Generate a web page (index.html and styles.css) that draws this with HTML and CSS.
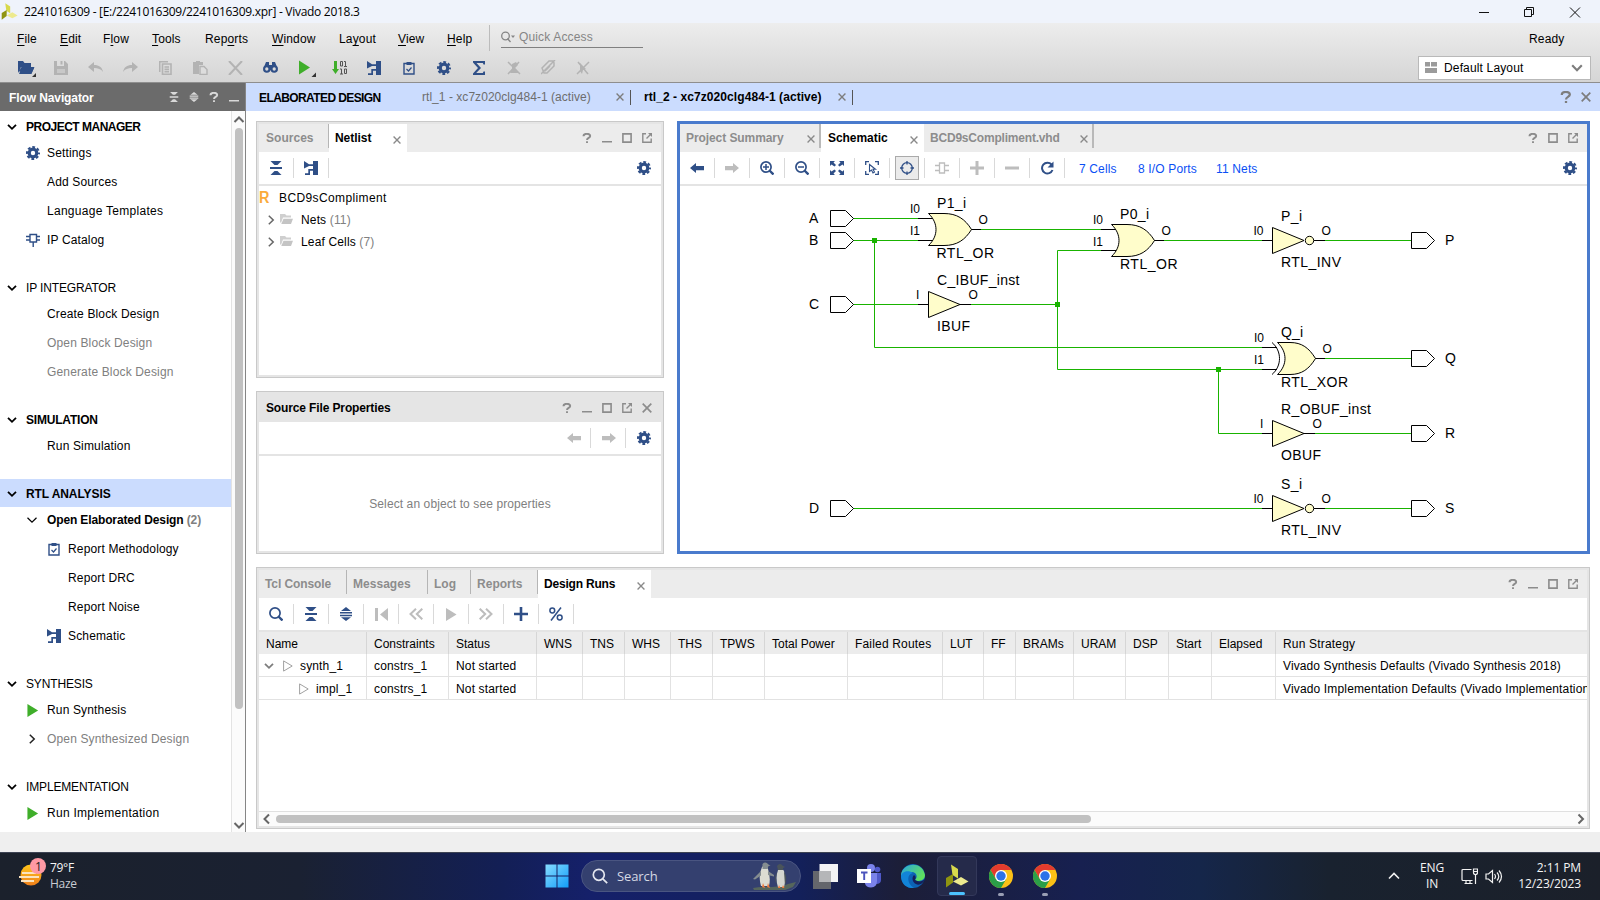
FILE: index.html
```html
<!DOCTYPE html>
<html lang="en">
<head>
<meta charset="utf-8">
<title>Vivado 2018.3</title>
<link rel="stylesheet" href="styles.css">
</head>
<body>
<svg class="defs" width="0" height="0">
  <defs>
    <symbol id="gear" viewBox="0 0 14 14"><circle cx="7" cy="7" r="3.8" fill="none" stroke="currentColor" stroke-width="3.2"/><circle cx="7" cy="7" r="6" fill="none" stroke="currentColor" stroke-width="2" stroke-dasharray="2.8 1.912" stroke-dashoffset="1.4"/></symbol>
    <symbol id="schem" viewBox="0 0 14 14"><path d="M0 0 5 3.2H9V0h5v14H9V5H5L0 7.500zM1 14v-1.700h3.300V8H10v1.700H6V14z" fill="currentColor"/></symbol>
    <symbol id="collapse" viewBox="0 0 14 14"><path d="M1.500 0h11L8.500 4h-3zM1 6h12v2H1zM1.500 14h11L8.500 10h-3z" fill="currentColor"/></symbol>
    <symbol id="expand" viewBox="0 0 14 14"><path d="M7 0l5 4H2zM1 5h12v1.500H1zM1 7.800h12v1.500H1zM2 10.300h10l-5 3.700z" fill="currentColor"/></symbol>
    <symbol id="help" viewBox="0 0 10 10"><path d="M1.500 3.300C1.500 0 8.200 0 8.200 3c0 2-3.200 1.800-3.200 4M5 8.300v1.700" fill="none" stroke="currentColor" stroke-width="1.900"/></symbol>
    <symbol id="min" viewBox="0 0 10 10"><path d="M0 8h10v1.500H0z" fill="currentColor"/></symbol>
    <symbol id="max" viewBox="0 0 10 10"><path d="M.9.900h8.200v8.200H.9z" fill="none" stroke="currentColor" stroke-width="1.600"/></symbol>
    <symbol id="float" viewBox="0 0 10 10"><path d="M4 .8H.8v8.400h8.400V5.500M4.500 5.500 8.500 1.500" fill="none" stroke="currentColor" stroke-width="1.400"/><path d="M6 0h4v4z" fill="currentColor"/></symbol>
    <symbol id="x" viewBox="0 0 10 10"><path d="M.7.700l8.600 8.600M9.300.700L.7 9.300" fill="none" stroke="currentColor" stroke-width="1.700"/></symbol>
    <symbol id="down" viewBox="0 0 10 10"><path d="M1 2.800l4 4 4-4" fill="none" stroke="currentColor" stroke-width="1.800"/></symbol>
    <symbol id="thin-down" viewBox="0 0 10 10"><path d="M.5 2.800 5 7.200l4.500-4.400" fill="none" stroke="currentColor" stroke-width="1.200"/></symbol>
    <symbol id="right" viewBox="0 0 10 10"><path d="M2.800.8 7.200 5 2.800 9.200" fill="none" stroke="currentColor" stroke-width="1.500"/></symbol>
    <symbol id="clip" viewBox="0 0 12 14"><path d="M1 2.500h10V13H1z" fill="none" stroke="currentColor" stroke-width="1.400"/><path d="M3.500 1h5v3h-5z" fill="currentColor"/><path d="M3.500 8l2 2 3-3.500" fill="none" stroke="currentColor" stroke-width="1.200"/></symbol>
    <symbol id="ip" viewBox="0 0 14 14"><path d="M4 1.500h6.500V9H4zM0 3.500h4M0 7h4M10.500 3.500H14M10.500 7H14M7.200 9v5" fill="none" stroke="currentColor" stroke-width="1.400"/></symbol>
    <symbol id="play" viewBox="0 0 12 14"><path d="M0 0l11.500 7L0 14z" fill="currentColor"/></symbol>
    <symbol id="tri" viewBox="0 0 10 12"><path d="M.6.900 9.200 6 .6 11.100z" fill="none" stroke="currentColor" stroke-width="1"/></symbol>
    <symbol id="folder" viewBox="0 0 13 11"><path d="M0 0h5l1.500 1.500H11V3.500H3L1 9 0 8z" fill="#cfcfcf"/><path d="M3.500 4.700H13L11 10H1.300z" fill="#c4c4c4"/></symbol>
    <symbol id="larrow" viewBox="0 0 14 10"><path d="M0 5l6-5v3h8v4.200H6V10z" fill="currentColor"/></symbol>
    <symbol id="rarrow" viewBox="0 0 14 10"><path d="M14 5L8 0v3H0v4.200h8V10z" fill="currentColor"/></symbol>
    <symbol id="search" viewBox="0 0 14 14"><circle cx="6" cy="6" r="5.100" fill="none" stroke="currentColor" stroke-width="1.700"/><path d="M9.500 9.500l4 4" stroke="currentColor" stroke-width="2.400"/></symbol>
    <symbol id="chrome" viewBox="0 0 24 24"><circle cx="12" cy="12" r="12" fill="#fbc116"/><path d="M12 6h10.400A12 12 0 0 0 1.600 6L6.800 15z" fill="#e33b2e"/><path d="M1.600 6A12 12 0 0 0 12 24l5.200-9H6.800z" fill="#2b9f48"/><circle cx="12" cy="12" r="6" fill="#fff"/><circle cx="12" cy="12" r="4.700" fill="#2d72e8"/></symbol>
    <symbol id="vivado" viewBox="0 0 24 24"><path d="M6 0.500l7 4.500v9.500L7.500 11z" fill="#d8d94c"/><path d="M1 14l7-4v8.500l-7 5z" fill="#8f9410"/><path d="M8 17.500l8-4.500 7.500 4.500-7.500 4z" fill="#edea8e"/></symbol>
  </defs>
</svg>

<header class="titlebar">
  <svg class="logo" width="17" height="17"><use href="#vivado"/></svg>
  <span class="title">2241016309 - [E:/2241016309/2241016309.xpr] - Vivado 2018.3</span>
  <svg class="winbtns" width="110" height="20" fill="none" stroke="#111"><path d="M0 10.500h10M45.500 7.500h7v7h-7zM47.500 7.500v-2h7v7h-2M91 5.500l10 10M101 5.500l-10 10"/></svg>
</header>

<section class="top">
  <div class="menurow">
    <nav class="menu">
      <span><u>F</u>ile</span><span><u>E</u>dit</span><span>F<u>l</u>ow</span><span><u>T</u>ools</span><span>Rep<u>o</u>rts</span><span><u>W</u>indow</span><span>La<u>y</u>out</span><span><u>V</u>iew</span><span><u>H</u>elp</span>
    </nav>
    <div class="quick"><svg width="15" height="12" fill="none" stroke="#858585" stroke-width="1.300"><circle cx="4.500" cy="5" r="3.800"/><path d="M6.500 7.500l3 3.500"/><path d="M10 4.500h4l-2 2.500z" fill="#858585" stroke="none"/></svg><span>Quick Access</span></div>
    <span class="ready">Ready</span>
  </div>
  <div class="iconrow">
    <i><svg width="20" height="18"><path d="M2 2h5l1.500 2H15v4H5L3 12.500 14 13h2l2.500-5H5.500L2 14z" fill="#2f4f87"/><path d="M5.500 9H18l-2.500 6H3z" fill="#2f4f87"/><path d="M20 14v4h-4z" fill="#333"/></svg></i>
    <i class="off"><svg width="14" height="14"><path d="M0 0h3v5h7V0h1l3 3v11H0z M6.500 0h2v3.500h-2z" fill="currentColor"/><path d="M3 9h8M3 11h8" stroke="#ddd"/></svg></i>
    <i class="off"><svg width="15" height="11"><path d="M0 5L6 0v3c5 0 8 2 9 7-2-3-5-4-9-4v4z" fill="currentColor"/></svg></i>
    <i class="off"><svg width="15" height="11"><path d="M15 5L9 0v3C4 3 1 5 0 10c2-3 5-4 9-4v4z" fill="currentColor"/></svg></i>
    <i class="off"><svg width="13" height="14" fill="none" stroke="currentColor" stroke-width="1.600"><path d="M.7 11V.7H9M3.500 3h8.500v10.300H3.500zM5.500 6h4.500M5.500 8.300h4.500M5.500 10.600h4.500"/></svg></i>
    <i class="off"><svg width="15" height="14"><path d="M0 1h3V0h4v1h3v3H6v9H0z" fill="currentColor"/><path d="M7 5.500h4l3 3v5H7z" fill="#ddd" stroke="currentColor" stroke-width="1.400"/></svg></i>
    <i class="off"><svg width="15" height="14"><path d="M1 0l13 14M14 0L1 14" stroke="currentColor" stroke-width="2"/></svg></i>
    <i class="bino"><svg width="15" height="11"><circle cx="3.800" cy="7" r="2.700" fill="none" stroke="#2f4f87" stroke-width="2.100"/><circle cx="11.200" cy="7" r="2.700" fill="none" stroke="#2f4f87" stroke-width="2.100"/><path d="M3 0h3v3h3V0h3l2 5H1zM6 4h3v4H6z" fill="#2f4f87"/></svg></i>
    <i class="run"><svg width="20" height="18"><path d="M2 1.500l11 7-11 7z" fill="#3fae2a"/><path d="M19 13.500v4.500h-4.500z" fill="#333"/></svg></i>
    <i><svg width="15" height="14"><path d="M2 0h3v8h2l-3.500 5L0 8h2z" fill="#3fae2a"/><g fill="none" stroke="#555"><path d="M8.500 .5h2v4.500h-2zM12 .5h1.500v5M12 5.500h3M8 8h1.500v5M8 13h3M12.500 8h2v4.500h-2z"/></g></svg></i>
    <i><svg width="14" height="14"><use href="#schem"/></svg></i>
    <i><svg width="12" height="14"><use href="#clip"/></svg></i>
    <i><svg width="14" height="14"><use href="#gear"/></svg></i>
    <i><svg width="14" height="14"><path d="M1 0h12v3.500h-1.500l-.7-1.500H4.500L9 7l-4.800 5h6.600l.7-1.500H13V14H1v-1.500L6 7 1 1.500z" fill="#2f4f87"/></svg></i>
    <i class="off"><svg width="14" height="14" fill="none" stroke="currentColor" stroke-width="1.500"><path d="M1 1l12 12M1 13L12 1"/><path d="M5 3l4-2 2 3-3 3 4 5H3l2-4z" fill="currentColor" stroke="none"/></svg></i>
    <i class="off"><svg width="15" height="15" fill="none" stroke="currentColor" stroke-width="1.500"><path d="M1 8l7-7h4l1 2v3l-7 7H3zM0 14L14 0M4 11l5-5"/></svg></i>
    <i class="off"><svg width="14" height="14" fill="none" stroke="currentColor" stroke-width="1.500"><path d="M1 13L13 1M2 1l10 12"/><path d="M4 2l6 6-3 1-1 4-2-3z" fill="currentColor" stroke="none"/></svg></i>
    <div class="combo"><svg width="12" height="11"><path d="M0 0h5v4.500H0zM6 0h6v4.500H6zM0 6h12v5H0z" fill="#9b9b9b"/></svg><span>Default Layout</span><svg class="gray" width="12" height="12"><use href="#down"/></svg></div>
  </div>
</section>

<main class="body">
  <aside class="nav">
    <div class="navhead"><span>Flow Navigator</span><svg width="10" height="10"><use href="#collapse"/></svg><svg width="10" height="10"><use href="#expand"/></svg><svg width="10" height="10"><use href="#help"/></svg><svg width="10" height="10"><use href="#min"/></svg></div>
    <div class="navbody">
      <div class="navlist">
        <section><h2 class="b pm"><svg width="10" height="10"><use href="#down"/></svg>PROJECT MANAGER</h2>
          <ul><li><svg class="blue" width="14" height="14"><use href="#gear"/></svg>Settings</li><li>Add Sources</li><li class="wide">Language Templates</li><li><svg class="blue" width="14" height="14"><use href="#ip"/></svg>IP Catalog</li></ul></section>
        <section><h2><svg width="10" height="10"><use href="#down"/></svg>IP INTEGRATOR</h2>
          <ul><li>Create Block Design</li><li class="dim">Open Block Design</li><li class="dim">Generate Block Design</li></ul></section>
        <section><h2 class="b sim"><svg width="10" height="10"><use href="#down"/></svg>SIMULATION</h2>
          <ul><li>Run Simulation</li></ul></section>
        <section><h2 class="b sel"><svg width="10" height="10"><use href="#down"/></svg>RTL ANALYSIS</h2>
          <ul><li class="bb"><svg width="10" height="10"><use href="#thin-down"/></svg>Open Elaborated Design&nbsp;<em>(2)</em></li><li class="sub"><svg class="blue" width="12" height="14"><use href="#clip"/></svg>Report Methodology</li><li class="sub">Report DRC</li><li class="sub">Report Noise</li><li class="sub"><svg class="blue" width="14" height="14"><use href="#schem"/></svg>Schematic</li></ul></section>
        <section><h2><svg width="10" height="10"><use href="#down"/></svg>SYNTHESIS</h2>
          <ul><li><svg class="green" width="12" height="13"><use href="#play"/></svg>Run Synthesis</li><li class="dim"><svg class="black" width="10" height="10"><use href="#right"/></svg>Open Synthesized Design</li></ul></section>
        <section><h2><svg width="10" height="10"><use href="#down"/></svg>IMPLEMENTATION</h2>
          <ul><li class="wide"><svg class="green" width="12" height="13"><use href="#play"/></svg>Run Implementation</li></ul></section>
      </div>
      <div class="vscroll"><svg width="12" height="10"><path d="M1.500 8L6 3.500 10.500 8" fill="none" stroke="#666" stroke-width="2"/></svg><div class="vthumb"></div><svg width="12" height="10"><path d="M1.500 2L6 6.500 10.500 2" fill="none" stroke="#666" stroke-width="2"/></svg></div>
    </div>
  </aside>

  <div class="work">
    <div class="designbar">
      <b class="ed">ELABORATED DESIGN</b>
      <span class="r1">rtl_1 - xc7z020clg484-1 (active)</span><svg class="gray" width="8" height="8"><use href="#x"/></svg><i></i>
      <b class="r2">rtl_2 - xc7z020clg484-1 (active)</b><svg class="gray" width="8" height="8"><use href="#x"/></svg><i></i>
      <span class="grow"></span><svg class="gray" width="12" height="12"><use href="#help"/></svg><svg class="gray" width="10" height="10"><use href="#x"/></svg>
    </div>
    <div class="panels">
      <div class="leftcol">
        <div class="panel netlist">
          <div class="tabs"><span class="tab w1">Sources</span><span class="tab on w2">Netlist<svg width="8" height="8"><use href="#x"/></svg></span><span class="grow"></span><svg width="10" height="10"><use href="#help"/></svg><svg width="10" height="10"><use href="#min"/></svg><svg width="10" height="10"><use href="#max"/></svg><svg width="10" height="10"><use href="#float"/></svg></div>
          <div class="tools"><i><svg width="14" height="14"><use href="#collapse"/></svg></i><i><svg width="14" height="14"><use href="#schem"/></svg></i><span class="grow"></span><i class="last"><svg width="14" height="14"><use href="#gear"/></svg></i></div>
          <div class="tree">
            <div class="root"><b class="rr">R</b>BCD9sCompliment</div>
            <div class="t2"><svg width="10" height="10"><use href="#right"/></svg><svg class="fo" width="13" height="11"><use href="#folder"/></svg>Nets&nbsp;<em>(11)</em></div>
            <div class="t2"><svg width="10" height="10"><use href="#right"/></svg><svg class="fo" width="13" height="11"><use href="#folder"/></svg>Leaf Cells&nbsp;<em>(7)</em></div>
          </div>
        </div>
        <div class="panel props">
          <div class="tabs"><b>Source File Properties</b><span class="grow"></span><svg width="10" height="10"><use href="#help"/></svg><svg width="10" height="10"><use href="#min"/></svg><svg width="10" height="10"><use href="#max"/></svg><svg width="10" height="10"><use href="#float"/></svg><svg width="10" height="10"><use href="#x"/></svg></div>
          <div class="tools"><span class="grow"></span><i class="off"><svg width="14" height="10"><use href="#larrow"/></svg></i><i class="off"><svg width="14" height="10"><use href="#rarrow"/></svg></i><i class="last"><svg width="14" height="14"><use href="#gear"/></svg></i></div>
          <div class="empty">Select an object to see properties</div>
        </div>
      </div>
      <div class="panel schematic">
        <div class="tabs"><span class="tab s1">Project Summary<svg width="8" height="8"><use href="#x"/></svg></span><span class="tab on s2">Schematic<svg width="8" height="8"><use href="#x"/></svg></span><span class="tab s3">BCD9sCompliment.vhd<svg width="8" height="8"><use href="#x"/></svg></span><span class="grow"></span><svg width="10" height="10"><use href="#help"/></svg><svg width="10" height="10"><use href="#max"/></svg><svg width="10" height="10"><use href="#float"/></svg></div>
        <div class="tools">
          <i><svg width="14" height="10"><use href="#larrow"/></svg></i>
          <i class="off"><svg width="14" height="10"><use href="#rarrow"/></svg></i>
          <i><svg width="14" height="14"><use href="#search"/><path d="M3 6h6M6 3v6" stroke="currentColor" stroke-width="1.500"/></svg></i>
          <i><svg width="14" height="14"><use href="#search"/><path d="M3 6h6" stroke="currentColor" stroke-width="1.500"/></svg></i>
          <i><svg width="14" height="14" fill="currentColor"><path d="M0 0h5L3.500 1.500 6 4 4.500 5.500 1.500 3.500 0 5zM14 0v5l-1.500-1.500L9.500 5.500 8 4l2.500-2.500L9 0zM0 14V9l1.500 1.500L4.500 8.500 6 10l-2.500 2.500L5 14zM14 14H9l1.500-1.500L8 10l1.500-1.500 3 2L14 9z"/></svg></i>
          <i><svg width="14" height="14" fill="none" stroke="currentColor" stroke-width="1.300"><path d="M.7 4V.7H4M10 .7h3.300V4M.7 10v3.300H4M13.300 10v3.300H10"/><path d="M4.500 3.500v7l2-1.500 1.500 3 1.500-1-1.500-2.700h2.500z" stroke-width="1.100"/></svg></i>
          <i class="press"><span><svg width="14" height="14" fill="none" stroke="currentColor" stroke-width="1.300"><circle cx="7" cy="7" r="5.300"/><path d="M7 0v3.500M7 10.500V14M0 7h3.500M10.500 7H14"/></svg></span></i>
          <i class="off"><svg width="14" height="12" fill="none" stroke="currentColor" stroke-width="1.300"><path d="M4.500 1h5v10h-5zM0 3.500h4.500M0 8.500h4.500M9.500 3.500H14M9.500 8.500H14"/></svg></i>
          <i class="off"><svg width="14" height="14"><path d="M7 0v14M0 7h14" stroke="currentColor" stroke-width="3"/></svg></i>
          <i class="off"><svg width="14" height="14"><path d="M0 7h14" stroke="currentColor" stroke-width="3"/></svg></i>
          <i><svg width="14" height="14"><path d="M11.500 3.500a5.400 5.400 0 1 0 1 5.500" fill="none" stroke="currentColor" stroke-width="2"/><path d="M13.500.500v6h-6z" fill="currentColor"/></svg></i>
          <a class="l1">7 Cells</a><a class="l2">8 I/O Ports</a><a class="l3">11 Nets</a>
          <span class="grow"></span><i class="last"><svg width="14" height="14"><use href="#gear"/></svg></i>
        </div>
        <svg class="canvas" width="907" height="365" viewBox="680 186 907 365">
          <g fill="none" stroke="#19b300">
            <path d="M853 218.500H918M853 240.500H918M874.500 240.500V347.500H1262M853 304.500H918M971 304.500H1057.500M1101 250.500H1057.500V369.500H1262M981 229.500H1101M1164 240.500H1262M1218.500 369.500V433.500H1262M853 508.500H1262M1325 240.500H1411M1325 358.500H1411M1315 433.500H1411M1325 508.500H1411"/>
            <path d="M872 238h5v5h-5zM1055 302h5v5h-5zM1216 367h5v5h-5z" fill="#19b300" stroke="none"/>
          </g>
          <g fill="#fff" stroke="#000">
            <path d="M830.500 210.500h15l8 8-8 8h-15zM830.500 232.500h15l8 8-8 8h-15zM830.500 296.500h15l8 8-8 8h-15zM830.500 500.500h15l8 8-8 8h-15z"/>
            <path d="M1411.500 232.500h15l8 8-8 8h-15zM1411.500 350.500h15l8 8-8 8h-15zM1411.500 425.500h15l8 8-8 8h-15zM1411.500 500.500h15l8 8-8 8h-15z"/>
            <path fill="none" d="M918 218.500h16M918 240.500h16M971 229.500h10M1101 229.500h16M1101 250.500h16M1154 240.500h10M918 304.500h10M960 304.500h11M1262 240.500h10M1314 240.500h11M1262 347.500h15M1262 369.500h15M1315 358.500h10M1262 433.500h10M1304 433.500h11M1262 508.500h10M1314 508.500h11M1272 342.500C1282 351 1282 366 1272 374.500"/>
          </g>
          <g fill="#fffdcb" stroke="#000">
            <path d="M928.500 213.500H944C957 213.500 965 219 971.500 229.500 965 240 957 245.500 944 245.500H928.500C938.500 236 938.500 223 928.500 213.500z"/>
            <path d="M1111.500 224.500H1127C1140 224.500 1148 230 1154.500 240.500 1148 251 1140 256.500 1127 256.500H1111.500C1121.500 247 1121.500 234 1111.500 224.500z"/>
            <path d="M1277.500 342.500H1290C1302 342.500 1309 348 1315.500 358.500 1309 369 1302 374.500 1290 374.500H1277.500C1287.500 365 1287.500 352 1277.500 342.500z"/>
            <path d="M928.500 291.500v26l31.500-13zM1272.500 227.500v26l31.500-13zM1272.500 420.500v26l31.500-13zM1272.500 495.500v26l31.500-13z"/>
            <circle cx="1309.500" cy="240.500" r="4.200"/><circle cx="1309.500" cy="508.500" r="4.200"/>
          </g>
          <g class="lbl">
            <text x="809" y="223">A</text><text x="809" y="245">B</text><text x="809" y="309">C</text><text x="809" y="513">D</text>
            <text x="1445" y="245">P</text><text x="1445" y="363">Q</text><text x="1445" y="438">R</text><text x="1445" y="513">S</text>
            <text x="937" y="208" textLength="29">P1_i</text><text x="936.500" y="258" textLength="57.500">RTL_OR</text>
            <text x="937" y="285" textLength="82.500">C_IBUF_inst</text><text x="937" y="331" textLength="33">IBUF</text>
            <text x="1120" y="219" textLength="29">P0_i</text><text x="1120" y="269" textLength="57.500">RTL_OR</text>
            <text x="1281" y="221" textLength="21">P_i</text><text x="1281" y="267" textLength="60">RTL_INV</text>
            <text x="1281" y="337" textLength="22">Q_i</text><text x="1281" y="387" textLength="67">RTL_XOR</text>
            <text x="1281" y="414" textLength="90">R_OBUF_inst</text><text x="1281" y="460" textLength="40">OBUF</text>
            <text x="1281" y="489" textLength="21">S_i</text><text x="1281" y="535" textLength="60">RTL_INV</text>
          </g>
          <g class="pin">
            <text x="910" y="213">I0</text><text x="910" y="235">I1</text><text x="978.500" y="224">O</text>
            <text x="916" y="299">I</text><text x="968.500" y="299">O</text>
            <text x="1093" y="224">I0</text><text x="1093" y="246">I1</text><text x="1161.500" y="235">O</text>
            <text x="1253.500" y="235">I0</text><text x="1321.500" y="235">O</text>
            <text x="1254" y="342">I0</text><text x="1254" y="364">I1</text><text x="1322.500" y="353">O</text>
            <text x="1260" y="428">I</text><text x="1312.500" y="428">O</text>
            <text x="1253.500" y="503">I0</text><text x="1321.500" y="503">O</text>
          </g>
        </svg>
      </div>
    </div>
    <div class="panel runs">
      <div class="tabs"><span class="tab q1">Tcl Console</span><span class="tab q2">Messages</span><span class="tab q3">Log</span><span class="tab q4">Reports</span><span class="tab on q5">Design Runs<svg width="8" height="8"><use href="#x"/></svg></span><span class="grow"></span><svg width="10" height="10"><use href="#help"/></svg><svg width="10" height="10"><use href="#min"/></svg><svg width="10" height="10"><use href="#max"/></svg><svg width="10" height="10"><use href="#float"/></svg></div>
      <div class="tools">
        <i><svg width="14" height="14"><use href="#search"/></svg></i><i><svg width="14" height="14"><use href="#collapse"/></svg></i><i><svg width="14" height="14"><use href="#expand"/></svg></i>
        <i class="off"><svg width="13" height="13"><path d="M0 0h3v13H0zM13 0v13L5 6.500z" fill="currentColor"/></svg></i>
        <i class="off"><svg width="14" height="12" fill="none" stroke="currentColor" stroke-width="2"><path d="M7 .7L1.500 6 7 11.300M13.300.7L7.800 6l5.500 5.300"/></svg></i>
        <i class="off"><svg width="11" height="13"><use href="#play"/></svg></i>
        <i class="off"><svg width="14" height="12" fill="none" stroke="currentColor" stroke-width="2"><path d="M7 .7L12.500 6 7 11.300M.7.700L6.200 6 .7 11.300"/></svg></i>
        <i><svg width="14" height="14"><path d="M7 0v14M0 7h14" stroke="currentColor" stroke-width="2.600"/></svg></i>
        <i><svg width="14" height="14" fill="none" stroke="currentColor" stroke-width="1.500"><circle cx="3.300" cy="3.500" r="2.400"/><circle cx="10.700" cy="10.500" r="2.400"/><path d="M12 .5L2 13.500"/></svg></i>
      </div>
      <div class="table">
        <div class="tr th"><span>Name</span><span>Constraints</span><span>Status</span><span>WNS</span><span>TNS</span><span>WHS</span><span>THS</span><span>TPWS</span><span>Total Power</span><span class="fr">Failed Routes</span><span>LUT</span><span>FF</span><span>BRAMs</span><span>URAM</span><span>DSP</span><span>Start</span><span>Elapsed</span><span class="fr">Run Strategy</span></div>
        <div class="tr"><span class="n1"><svg class="gray" width="10" height="10"><use href="#down"/></svg><svg class="tri" width="10" height="12"><use href="#tri"/></svg>synth_1</span><span>constrs_1</span><span>Not started</span><span></span><span></span><span></span><span></span><span></span><span></span><span></span><span></span><span></span><span></span><span></span><span></span><span></span><span></span><span class="st">Vivado Synthesis Defaults (Vivado Synthesis 2018)</span></div>
        <div class="tr"><span class="n2"><svg class="tri" width="10" height="12"><use href="#tri"/></svg>impl_1</span><span>constrs_1</span><span>Not started</span><span></span><span></span><span></span><span></span><span></span><span></span><span></span><span></span><span></span><span></span><span></span><span></span><span></span><span></span><span>Vivado Implementation Defaults (Vivado Implementation</span></div>
      </div>
      <div class="hscroll"><svg width="10" height="12"><path d="M7 1.500L2.500 6 7 10.500" fill="none" stroke="#666" stroke-width="2"/></svg><div class="hthumb"></div><span class="grow"></span><svg width="10" height="12"><path d="M2.500 1.500L7 6l-4.500 4.500" fill="none" stroke="#666" stroke-width="2"/></svg></div>
    </div>
  </div>
</main>
<div class="status"></div>

<footer class="taskbar">
  <div class="weather"><svg width="28" height="30"><defs><linearGradient id="sun" x1="0" y1="0" x2="0" y2="1"><stop offset="0" stop-color="#ffc61a"/><stop offset="1" stop-color="#ef7f1a"/></linearGradient></defs><circle cx="13" cy="17" r="10.500" fill="url(#sun)"/><path d="M4 15h14M1 19h20M3 23h13" stroke="#fbe3bd" stroke-width="1.800"/><circle cx="20" cy="8" r="8" fill="#ff99a4"/><text x="17" y="12.500" class="badge">1</text></svg><div><p>79°F</p><p class="hz">Haze</p></div></div>
  <div class="apps">
    <svg class="start" width="24" height="24"><defs><linearGradient id="win" x1="0" y1="0" x2="1" y2="1"><stop offset="0" stop-color="#86dcff"/><stop offset="1" stop-color="#129df8"/></linearGradient></defs><path d="M.5.500h11v11H.5zM12.500.500h11v11h-11zM.5 12.500h11v11H.5zM12.500 12.500h11v11h-11z" fill="url(#win)"/></svg>
    <div class="sbox"><svg width="16" height="16" fill="none" stroke="#e4e6ef" stroke-width="1.700"><circle cx="6.800" cy="6.800" r="5.500"/><path d="M10.800 10.800l4.400 4.400"/></svg><span>Search</span>
      <svg width="46" height="30" viewBox="0 0 46 30"><path d="M1 27q8-2 19-1 12-1 16-3l8-2-3 5-8 3H2z" fill="#56665c"/><path d="M10 6q4-3 6 2 3 9 1 17H9Q6 15 10 6z" fill="#dcdcd2"/><path d="M9 10L1 18l2 .500 6-4zM16 10l6 4v1.500l-6-1.500zM10.500 3q3-3 6 .5l2 1-2 .5-1 3h-5z" fill="#858d90"/><path d="M26 9q4-3 6 1 2.500 9 0 16h-6q-3-9 0-17z" fill="#d3d5cf"/><path d="M25 5q3-4 6 0l2 1-2 1v2h-5zM25.500 10q-3 7-.5 14-4-7 .5-14zM32 10q4 7 1 15z" fill="#4a545a"/><path d="M10 26l1-4 2 5zM15 26l1-4 2 5zM26 27l1-3 1.500 3zM30 27l1-3 1.500 3z" fill="#f07b3c"/></svg></div>
    <svg class="tv" width="25" height="25"><path d="M0 7h18v18H0z" fill="#64666c"/><path d="M6.500 0H25v18H6.500z" fill="#f3f3f4"/><path d="M6.500 7H18v11H6.500z" fill="#b5b6b8"/></svg>
    <svg class="tm" width="25" height="24"><circle cx="20.500" cy="5.500" r="2.800" fill="#5059c9"/><circle cx="14" cy="4" r="4" fill="#7b83eb"/><path d="M17 9h7v7q0 4-5 4z" fill="#5059c9"/><path d="M8 9h12v8q0 6-6 6.500-5 0-6-4z" fill="#7b83eb"/><path d="M0 5h14v14H0z" fill="#fff"/><path d="M4 8.500h6.500M7.200 8.500V16" stroke="#4b53bc" stroke-width="1.900"/></svg>
    <svg class="eg" width="24" height="24" viewBox="0 0 24 24"><defs><linearGradient id="eg1" x1="0" y1="0" x2="1" y2=".5"><stop offset="0" stop-color="#2ba7e0"/><stop offset="1" stop-color="#5fe05e"/></linearGradient></defs><circle cx="12" cy="12" r="12" fill="#0c62b4"/><path d="M0 11C1-1 21-4 24 11c0 6-7 7-10 5 3-3 2-8-4-8-6 0-9 2-10 5z" fill="url(#eg1)"/><path d="M0 12c1-5 8-6 12-3-6 1-7 10 1 15C5 25 0 19 0 12z" fill="#1284d8"/><path d="M14 16c3 2 7 2 10-1-1 4-6 7-9 5-3-1-5-6-2-9 2 1 2 3 1 5z" fill="#14205a"/></svg>
    <div class="vv"><svg width="24" height="24"><use href="#vivado"/></svg><i></i></div>
    <div class="ch"><svg width="24" height="24"><use href="#chrome"/></svg><i></i></div>
    <div class="ch"><svg width="24" height="24"><use href="#chrome"/></svg><i></i></div>
  </div>
  <div class="tray">
    <svg width="12" height="8" fill="none" stroke="#f2f2f2" stroke-width="1.600"><path d="M1 6.500l5-5 5 5"/></svg>
    <div class="lang"><p>ENG</p><p>IN</p></div>
    <svg class="mon" width="17" height="17" fill="none" stroke="#f2f2f2" stroke-width="1.200"><path d="M10.500 1.500H2q-1 0-1 1v9q0 1 1 1h9.500M5 12.500v3M9 12.500v3M3.500 15.500h8M12.500 1h4v3.500q0 2-2 2t-2-2zM12.500 3.500h4M14.500 6.500V16"/></svg>
    <svg class="spk" width="18" height="15" fill="none" stroke="#f2f2f2" stroke-width="1.200"><path d="M1 5h2.500L7.500 1.500v12L3.500 10H1zM9.500 5q2 2.500 0 5M12 3.500q3.500 4 0 8M14 1.500q5 6 0 12"/></svg>
    <div class="clock"><p>2:11 PM</p><p>12/23/2023</p></div>
  </div>
</footer>
</body>
</html>
```

FILE: styles.css
```css
* { box-sizing: border-box; }
body { margin: 0; width: 1600px; height: 900px; overflow: hidden; display: flex; flex-direction: column; font: 12px/16px "Liberation Sans", Arial, sans-serif; letter-spacing: .15px; color: #000; background: #fff; }
p, h2, ul { margin: 0; padding: 0; }
em, i { font-style: normal; }
em { color: #808080; }
svg { flex: none; display: block; }
.defs { position: absolute; }
.grow { flex: 1; }
.gray { color: #7d7d7d; }
.blue { color: #2f4f87; }
.green { color: #3fae2a; }
.black { color: #222; }

.titlebar { height: 23px; flex: none; display: flex; align-items: center; background: #eff3fb; padding-left: 1px; }
.title { font: 12px/20px "Open Sans", "Noto Sans", sans-serif; letter-spacing: -.28px; margin-left: 6px; flex: 1; }
.winbtns { margin-right: 11px; }

.top { height: 60px; flex: none; background: linear-gradient(#ededed, #d5d5d5); border-bottom: 1px solid #8e8e8e; }
.menurow { height: 30px; display: flex; align-items: center; }
.menu { display: grid; grid-template-columns: 43px 43px 49px 53px 67px 67px 59px 49px 42px; padding: 2px 0 0 17px; width: 489px; }
.menu u { text-underline-offset: 2px; }
.quick { height: 26px; border-left: 1px solid #bcbcbc; padding: 0 0 3px 11px; display: flex; gap: 3px; align-items: center; color: #858585; width: 154px; background: linear-gradient(#808080, #808080) 11px 22px / 142px 1px no-repeat; }
.ready { margin-left: auto; width: 71px; padding-top: 2px; }
.iconrow { height: 29px; display: flex; align-items: center; padding: 0 9px 0 9px; color: #2f4f87; }
.iconrow > i { width: 34.8px; display: flex; justify-content: center; align-items: center; height: 28px; }
.iconrow > .bino { padding-left: 2px; }
.iconrow > .run { padding-left: 5px; }
.off { color: #bdbdbd !important; }
.iconrow .off { color: #b3b3b3 !important; }
.combo { margin-left: auto; width: 173px; height: 24px; border: 1px solid #b9b9b9; background: #fff; color: #000; display: flex; align-items: center; padding: 0 7px 0 6px; }
.combo span { flex: 1; margin-left: 7px; padding-top: 1px; }

.body { height: 749px; flex: none; display: flex; }
.nav { width: 246px; flex: none; border-right: 1px solid #858585; display: flex; flex-direction: column; }
.navhead { height: 28px; background: #6b6b6b; color: #d9d9d9; font-weight: bold; letter-spacing: -.1px; display: flex; align-items: center; gap: 10px; padding: 2px 6px 0 9px; }
.navhead svg { margin-top: -2px; }
.navhead span { flex: 1; color: #fff; }
.navbody { height: 721px; display: flex; }
.navlist { width: 231px; padding-top: 1px; }
.navlist section { margin-bottom: 19px; }
.navlist h2 { height: 28px; font-size: 12px; font-weight: normal; letter-spacing: -.15px; display: flex; align-items: center; gap: 9px; padding: 1px 0 0 7px; }
.navlist h2.b { font-weight: bold; letter-spacing: -.08px; }
.navlist h2.pm { letter-spacing: -.5px; }
.navlist h2.sim { letter-spacing: -.2px; }
.navlist h2.sel { background: #cbdcfe; }
.navlist ul { margin-top: -2px; list-style: none; }
.navlist li { height: 29px; display: flex; align-items: center; padding: 1px 0 0 47px; }
.navlist li svg { width: 14px; margin-left: -21px; margin-right: 7px; }
.navlist li.bb { font-weight: bold; letter-spacing: -.13px; }
.navlist li.sub { padding-left: 68px; }
.navlist li.wide { letter-spacing: .28px; }
.navlist li svg[width="10"] { width: 10px; margin-right: 10px; margin-left: -20px; }
.dim { color: #808080; }
.vscroll { width: 14px; border-left: 1px solid #e3e3e3; background: #fbfbfb; display: flex; flex-direction: column; align-items: center; padding: 3px 0 1px; }
.vthumb { width: 8px; height: 581px; margin: 4px 0 auto; border-radius: 4px; background: #c1c1c1; }

.work { flex: 1; min-width: 0; }
.designbar { height: 28px; background: #cbdcfe; display: flex; align-items: center; padding: 0 9px 0 13px; }
.designbar b { letter-spacing: 0; }
.designbar .ed { width: 163px; padding-top: 1px; letter-spacing: -.6px; }
.designbar .r1 { width: 194px; color: #6d6d6d; letter-spacing: .04px; }
.designbar .r2 { width: 194px; letter-spacing: .07px; }
.designbar i { width: 1px; height: 15px; background: #555; margin: 0 13px 0 6px; }
.designbar .grow + svg { margin-right: 9px; }

.panels { display: flex; gap: 13px; padding: 10px 0 0 10px; }
.leftcol { width: 408px; display: flex; flex-direction: column; gap: 13px; }
.panel { border: 1px solid #c9c9c9; background: #fff; box-shadow: inset 0 0 0 2px #e5e5e5; padding: 2px; display: flex; flex-direction: column; }
.netlist { height: 257px; }
.props { height: 163px; }
.schematic { width: 913px; height: 433px; border: 3px solid #4a7bcd; padding: 0; box-shadow: none; }
.runs { width: 1334px; height: 262px; margin: 13px 0 0 10px; }
.tabs { height: 28px; flex: none; background: #ececec; display: flex; align-items: center; color: #8c8c8c; padding-right: 9px; }
.tabs > svg { margin-left: 10px; }
.tab { height: 24px; align-self: flex-start; border-right: 1px solid #b5b5b5; font-weight: bold; letter-spacing: .03px; display: flex; align-items: center; justify-content: space-between; padding: 3px 6px 0 7px; }
.tab svg { color: #8a8a8a; margin-top: 2px; }
.tab.on { height: 28px; background: #fff; color: #000; border: 0; padding-bottom: 2px; padding-top: 2px; letter-spacing: -.05px; }
.tab.on svg { margin-top: 3px; }
.w1 { width: 70px; } .tab.w2 { width: 78px; padding-left: 6px; }
.s1 { width: 141px; border-right: 2px solid #b9b9b9; padding-left: 6px; padding-right: 4px; letter-spacing: -.08px; } .s2 { width: 103px; } .s3 { width: 170px; border-right: 2px solid #b9b9b9; padding-left: 6px; padding-right: 4px; letter-spacing: -.2px; }
.q1 { width: 88px; padding-left: 6px; letter-spacing: -.1px; } .q2 { width: 81px; padding-left: 6px; } .q3 { width: 43px; padding-left: 6px; } .q4 { width: 67px; padding-left: 6px; } .tab.q5 { width: 113px; padding-left: 6px; letter-spacing: -.2px; }
.props .tabs { background: #e5e5e5; padding: 0 9px 1px 7px; }
.props .tabs b { color: #000; letter-spacing: -.13px; }
.tools { height: 34px; flex: none; border-bottom: 2px solid #e4e4e4; display: flex; align-items: center; color: #2f4f87; }
.tools > i { width: 35px; height: 20px; border-right: 1px solid #d9d9d9; display: flex; align-items: center; justify-content: center; }
.tools > i.last { border: 0; }
.props .tools .off { padding-left: 2px; }
.press span { width: 24px; height: 24px; flex: none; border: 1px solid #aaa; background: #ebebeb; display: flex; align-items: center; justify-content: center; }
.tools a { color: #0a4ff5; padding-top: 2px; }
.l1 { margin-left: 14px; width: 59px; } .l2 { width: 78px; }
.tree > div { height: 22px; display: flex; align-items: center; padding-top: 1px; }
.tree .root { letter-spacing: .38px; }
.rr { width: 20px; font-size: 16px; color: #fbab3c; letter-spacing: 0; transform: scaleX(.9); transform-origin: 0 50%; }
.t2 { padding-left: 7px; }
.t2 svg { color: #666; }
.t2 .fo { margin: 0 8px 0 4px; }
.empty { flex: 1; display: flex; align-items: center; justify-content: center; color: #808080; letter-spacing: .1px; }
.canvas text { letter-spacing: 0; }
.lbl { font-size: 14px; }
.pin { font-size: 12px; }

.table { flex: 1; }
.tr { display: grid; grid-template-columns: 108px 82px 88px 46px 42px 46px 42px 52px 83px 95px 41px 32px 58px 52px 43px 43px 64px 311px; height: 23px; }
.tr span { border-right: 1px solid #e2e2e2; border-bottom: 1px solid #e2e2e2; padding: 1px 0 0 7px; display: flex; align-items: center; white-space: nowrap; overflow: hidden; }
.tr span:last-child { border-right: 0; }
.th { height: 22px; background: #ececec; }
.th span { border-bottom: 0; border-right-color: #d6d6d6; letter-spacing: 0; }
.th .fr { letter-spacing: .18px; }
.tr .st { letter-spacing: .11px; }
.tri { color: #a0a0a0; }
.tr .n1 { padding-left: 5px; } .n1 .tri { margin: 0 7px 0 9px; }
.tr .n2 { padding-left: 40px; } .n2 .tri { margin-right: 7px; }
.hscroll { height: 15px; border-top: 1px solid #e0e0e0; background: #fbfbfb; display: flex; align-items: center; padding: 0 1px 0 3px; }
.hthumb { width: 815px; height: 8px; border-radius: 4px; background: #c1c1c1; margin-left: 4px; }

.status { height: 20px; flex: none; background: #efefef; }
.taskbar { height: 48px; flex: none; border-top: 1px solid #3d4353; background: linear-gradient(90deg, #1b212c 0, #1a2132 300px, #131f55 500px, #15206a 590px, #13205a 800px, #1c1e38 900px, #172050 1080px, #15264a 1200px, #19222f 1330px, #1b202a 1600px); color: #f5f5f5; font: 12px/16px "Open Sans", "Noto Sans", sans-serif; letter-spacing: -.1px; display: flex; align-items: center; padding-bottom: 1px; }
.weather { width: 545px; display: flex; align-items: center; padding-left: 18px; gap: 4px; height: 46px; letter-spacing: -.3px; }
.weather svg { margin-top: -6px; }
.badge { font-size: 12px; fill: #222; }
.hz { color: #c9ccd2; }
.apps { display: flex; align-items: center; width: 528px; height: 47px; }
.sbox { width: 220px; height: 32px; margin-left: 12px; border-radius: 16px; background: #34406f; border: 1px solid #4a5581; display: flex; align-items: center; padding: 0 2px 0 10px; }
.sbox span { flex: 1; font-size: 13px; color: #d5d8e3; margin-left: 9px; }
.tv { margin-left: 12px; } .tm { margin-left: 19px; } .eg { margin-left: 19px; }
.vv { width: 40px; height: 40px; margin-left: 12px; border-radius: 4px; background: #252a4a; border: 1px solid #33385a; display: flex; align-items: center; justify-content: center; position: relative; }
.ch { width: 44px; height: 40px; display: flex; align-items: center; justify-content: center; position: relative; }
.vv + .ch { margin-left: 2px; }
.vv i { position: absolute; bottom: 0; left: 11px; width: 16px; height: 3px; border-radius: 2px; background: #4cc2ff; }
.ch i { position: absolute; bottom: 0; left: 19px; width: 6px; height: 3px; border-radius: 2px; background: #9a9fb4; }
.tray { flex: 1; display: flex; align-items: center; padding: 0 19px 0 315px; height: 46px; }
.lang { width: 40px; text-align: center; margin-left: 12px; }
.mon { margin-left: 9px; } .spk { margin-left: 7px; }
.clock { margin-left: auto; text-align: right; }
```
